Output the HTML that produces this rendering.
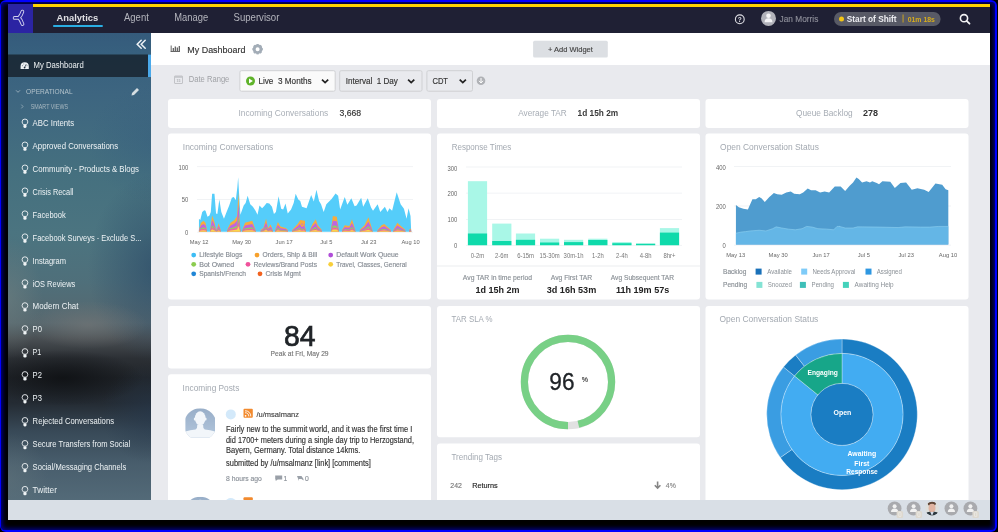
<!DOCTYPE html>
<html><head><meta charset="utf-8"><style>
html,body{margin:0;padding:0;width:998px;height:532px;overflow:hidden;background:#000;}
#frame{position:absolute;left:0;top:0;width:997px;height:532px;box-sizing:border-box;border-radius:6px;background:#0000ff;}
#inner{position:absolute;left:1px;top:2px;width:993.5px;height:527.5px;border-radius:4px;background:#000;box-shadow:inset 0 0 5px 1px rgba(0,0,210,0.8);}
#app{position:absolute;left:8px;top:4px;width:982px;height:516px;background:#e9eaee;border-radius:0 0 2px 2px;overflow:hidden;}
#side{position:absolute;left:8px;top:33px;width:143px;height:467px;
background:
radial-gradient(ellipse 80px 28px at 55px 345px, rgba(14,16,19,0.85), rgba(14,16,19,0) 100%),
radial-gradient(ellipse 60px 24px at 80px 292px, rgba(118,120,120,0.6), rgba(118,120,120,0) 100%),
radial-gradient(ellipse 70px 95px at 150px 235px, rgba(42,74,104,0.7), rgba(42,74,104,0) 100%),
radial-gradient(ellipse 70px 60px at 150px 110px, rgba(52,92,126,0.45), rgba(52,92,126,0) 100%),
radial-gradient(ellipse 35px 60px at 0px 265px, rgba(112,128,128,0.55), rgba(112,128,128,0) 100%),
radial-gradient(ellipse 50px 50px at 143px 380px, rgba(38,56,76,0.6), rgba(38,56,76,0) 100%),
radial-gradient(ellipse 40px 45px at 0px 445px, rgba(100,118,124,0.45), rgba(100,118,124,0) 100%),
linear-gradient(180deg,#355b7c 0px,#37607e 20px,#3d6580 60px,#45707f 140px,#4b7480 200px,#4f6f7a 250px,#56676e 290px,#4a5054 305px,#2c3035 325px,#202429 345px,#242b33 370px,#384957 398px,#485d6c 430px,#536a78 467px);}
svg{position:absolute;left:0;top:0;font-family:'Liberation Sans', sans-serif;will-change:transform;}
</style></head><body>
<div id="frame"></div><div id="inner"></div>
<div id="app"></div>
<div id="side"></div>
<svg width="998" height="532" viewBox="0 0 998 532">
<rect x="8" y="4" width="982" height="29" fill="#1f2034"/>
<rect x="33" y="4" width="957" height="3" fill="#ffd400"/>
<rect x="8" y="4" width="25" height="29" fill="#2b24a3"/>
<g stroke-linecap="round" stroke-linejoin="round" fill="none"><path d="M22.4 11.6 Q21 15.8 18.9 17.6 Q16.5 17.9 14.6 17.9 M18.9 17.6 Q21 19.8 22.5 24.1" stroke="#d4d4ee" stroke-width="3.7"/><path d="M22.4 11.6 Q21 15.8 18.9 17.6 Q16.5 17.9 14.6 17.9 M18.9 17.6 Q21 19.8 22.5 24.1" stroke="#2b23a3" stroke-width="1.9"/></g>
<text x="56.5" y="20.8" font-size="9.4" fill="#e0e0e4" font-weight="700" text-anchor="start"  textLength="41.69" lengthAdjust="spacingAndGlyphs">Analytics</text>
<rect x="53.2" y="25" width="49.5" height="2" fill="#2aaee3"/>
<text x="124" y="20.8" font-size="10.26" fill="#b4b5bd" font-weight="400" text-anchor="start"  textLength="24.83" lengthAdjust="spacingAndGlyphs">Agent</text>
<text x="174.3" y="20.8" font-size="10.15" fill="#b4b5bd" font-weight="400" text-anchor="start"  textLength="33.89" lengthAdjust="spacingAndGlyphs">Manage</text>
<text x="233.5" y="20.8" font-size="10.37" fill="#b4b5bd" font-weight="400" text-anchor="start"  textLength="45.86" lengthAdjust="spacingAndGlyphs">Supervisor</text>
<circle cx="739.8" cy="19.3" r="4.4" fill="none" stroke="#e0e0e6" stroke-width="1.1"/>
<text x="739.8" y="22.1" font-size="7.02" fill="#e0e0e6" font-weight="700" text-anchor="middle"  textLength="3.98" lengthAdjust="spacingAndGlyphs">?</text>
<circle cx="768.5" cy="18.4" r="7.5" fill="#b1b2ba"/>
<circle cx="768.5" cy="15.8" r="2.3" fill="#f4f4f6"/><path d="M764.6 22.3 q0 -4 3.9 -4 q3.9 0 3.9 4 z" fill="#f4f4f6"/>
<text x="779.6" y="22" font-size="8.96" fill="#8d8e99" font-weight="400" text-anchor="start"  stroke="#8d8e99" stroke-width="0.15" textLength="38.73" lengthAdjust="spacingAndGlyphs">Jan Morris</text>
<rect x="834" y="12" width="106.6" height="14" rx="7" fill="#585a66"/>
<circle cx="841.5" cy="18.9" r="2.5" fill="#f3c515"/>
<text x="846.8" y="21.9" font-size="8.96" fill="#ececf0" font-weight="700" text-anchor="start"  textLength="49.78" lengthAdjust="spacingAndGlyphs">Start of Shift</text>
<rect x="902.6" y="14.5" width="0.9" height="8" fill="#d4a91c"/>
<text x="907.7" y="21.9" font-size="7.45" fill="#d6ac1e" font-weight="700" text-anchor="start"  textLength="27.20" lengthAdjust="spacingAndGlyphs">01m 18s</text>
<circle cx="964" cy="18.2" r="3.6" fill="none" stroke="#f2f2f4" stroke-width="1.6"/><path d="M966.6 20.8 L969.5 23.7" stroke="#f2f2f4" stroke-width="1.8" stroke-linecap="round"/>
<rect x="151" y="33" width="839" height="32" fill="#ffffff"/>
<rect x="151" y="65" width="839" height="435" fill="#e9eaee"/>
<g fill="#555"><rect x="170.7" y="45.5" width="0.9" height="6.3"/><rect x="170.7" y="51" width="9.3" height="0.9"/><rect x="172.7" y="48" width="1.2" height="3"/><rect x="174.7" y="46.5" width="1.2" height="4.5"/><rect x="176.7" y="47.5" width="1.2" height="3.5"/><rect x="178.7" y="46" width="1.2" height="5"/></g>
<text x="187.3" y="52.8" font-size="9.67" fill="#333" font-weight="400" text-anchor="start"  stroke="#333" stroke-width="0.15" textLength="58.12" lengthAdjust="spacingAndGlyphs">My Dashboard</text>
<g transform="translate(257.6,49.2)"><circle r="3.4" fill="none" stroke="#a3adb7" stroke-width="2.8"/><rect x="-1.1" y="-5.2" width="2.2" height="2.4" fill="#a3adb7" transform="rotate(0)"/><rect x="-1.1" y="-5.2" width="2.2" height="2.4" fill="#a3adb7" transform="rotate(45)"/><rect x="-1.1" y="-5.2" width="2.2" height="2.4" fill="#a3adb7" transform="rotate(90)"/><rect x="-1.1" y="-5.2" width="2.2" height="2.4" fill="#a3adb7" transform="rotate(135)"/><rect x="-1.1" y="-5.2" width="2.2" height="2.4" fill="#a3adb7" transform="rotate(180)"/><rect x="-1.1" y="-5.2" width="2.2" height="2.4" fill="#a3adb7" transform="rotate(225)"/><rect x="-1.1" y="-5.2" width="2.2" height="2.4" fill="#a3adb7" transform="rotate(270)"/><rect x="-1.1" y="-5.2" width="2.2" height="2.4" fill="#a3adb7" transform="rotate(315)"/></g>
<rect x="533.1" y="40.7" width="74.7" height="16.9" rx="1.5" fill="#dcdfe3"/>
<text x="548" y="51.8" font-size="8.1" fill="#444" font-weight="400" text-anchor="start"  stroke="#444" stroke-width="0.15" textLength="44.83" lengthAdjust="spacingAndGlyphs">+ Add Widget</text>
<g fill="none" stroke="#b7b9bd" stroke-width="0.8"><rect x="174.5" y="76" width="8" height="7.5" rx="0.5"/></g><rect x="174.5" y="76" width="8" height="1.8" fill="#c4c6ca"/>
<text x="178.5" y="82.3" font-size="3.6" fill="#b0b2b6" font-weight="700" text-anchor="middle" >15</text>
<text x="188.8" y="82.3" font-size="8.21" fill="#a0a2a6" font-weight="400" text-anchor="start"  textLength="40.53" lengthAdjust="spacingAndGlyphs">Date Range</text>
<rect x="239.9" y="70.7" width="95.3" height="20.5" rx="1.5" fill="#fafafa" stroke="#cfd0d3" stroke-width="1"/>
<circle cx="250.5" cy="81" r="4.5" fill="#5fb32a"/><path d="M249 78.6 L252.9 81 L249 83.4 z" fill="#fff"/>
<text x="258.4" y="84" font-size="8.86" fill="#333" font-weight="400" text-anchor="start"  stroke="#333" stroke-width="0.15" textLength="53.25" lengthAdjust="spacingAndGlyphs">Live&#160;&#160;3 Months</text>
<path d="M322 79.6 L325.1 82.6 L328.2 79.6" fill="none" stroke="#222" stroke-width="1.7"/>
<rect x="339.7" y="70.7" width="82.3" height="20.5" rx="1.5" fill="#e9eaee" stroke="#cfd0d3" stroke-width="1"/>
<text x="345.7" y="84" font-size="8.75" fill="#333" font-weight="400" text-anchor="start"  stroke="#333" stroke-width="0.15" textLength="52.19" lengthAdjust="spacingAndGlyphs">Interval&#160;&#160;1 Day</text>
<path d="M408.1 79.6 L411.2 82.6 L414.3 79.6" fill="none" stroke="#222" stroke-width="1.7"/>
<rect x="426.9" y="70.7" width="45.6" height="20.5" rx="1.5" fill="#e9eaee" stroke="#cfd0d3" stroke-width="1"/>
<text x="432.4" y="84" font-size="8.21" fill="#333" font-weight="400" text-anchor="start"  stroke="#333" stroke-width="0.15" textLength="15.61" lengthAdjust="spacingAndGlyphs">CDT</text>
<path d="M459.7 79.6 L462.8 82.6 L465.9 79.6" fill="none" stroke="#222" stroke-width="1.7"/>
<circle cx="481" cy="80.8" r="4.3" fill="#b0b2b6"/><path d="M481 78 V82.5 M479 80.8 L481 83 L483 80.8" fill="none" stroke="#fff" stroke-width="1"/>
<rect x="168" y="99" width="263" height="29" rx="3" fill="#fff"/>
<rect x="437" y="99" width="263" height="29" rx="3" fill="#fff"/>
<rect x="705.5" y="99" width="263" height="29" rx="3" fill="#fff"/>
<text x="238.4" y="115.7" font-size="9.07" fill="#a9afb7" font-weight="400" text-anchor="start"  textLength="89.84" lengthAdjust="spacingAndGlyphs">Incoming Conversations</text>
<text x="339.4" y="116" font-size="9.4" fill="#333" font-weight="400" text-anchor="start"  stroke="#333" stroke-width="0.15" textLength="21.75" lengthAdjust="spacingAndGlyphs">3,668</text>
<text x="518.2" y="116.2" font-size="8.91" fill="#a7adb5" font-weight="400" text-anchor="start"  textLength="48.62" lengthAdjust="spacingAndGlyphs">Average TAR</text>
<text x="577.6" y="116.2" font-size="8.96" fill="#3a3a3a" font-weight="700" text-anchor="start"  textLength="40.59" lengthAdjust="spacingAndGlyphs">1d 15h 2m</text>
<text x="796" y="116" font-size="8.96" fill="#a7adb5" font-weight="400" text-anchor="start"  textLength="56.73" lengthAdjust="spacingAndGlyphs">Queue Backlog</text>
<text x="863.1" y="116" font-size="9.72" fill="#333" font-weight="700" text-anchor="start"  textLength="15.03" lengthAdjust="spacingAndGlyphs">278</text>
<rect x="168" y="133.5" width="263" height="166" rx="3" fill="#fff"/>
<rect x="437" y="133.5" width="263" height="166" rx="3" fill="#fff"/>
<rect x="705.5" y="133.5" width="263" height="166" rx="3" fill="#fff"/>
<rect x="168" y="306" width="263" height="62.6" rx="3" fill="#fff"/>
<rect x="168" y="374.3" width="263" height="140" rx="3" fill="#fff"/>
<rect x="437" y="306" width="263" height="131.2" rx="3" fill="#fff"/>
<rect x="437" y="443.5" width="263" height="70" rx="3" fill="#fff"/>
<rect x="705.5" y="306" width="263" height="210" rx="3" fill="#fff"/>
<text x="182.8" y="149.8" font-size="9.13" fill="#a3a9b1" font-weight="400" text-anchor="start"  textLength="90.52" lengthAdjust="spacingAndGlyphs">Incoming Conversations</text>
<rect x="197" y="166.29999999999998" width="216" height="0.8" fill="#eef0f3"/>
<rect x="197" y="199.1" width="216" height="0.8" fill="#eef0f3"/>
<rect x="197" y="231.79999999999998" width="216" height="0.8" fill="#eef0f3"/>
<text x="188.3" y="169.8" font-size="6.37" fill="#666" font-weight="400" text-anchor="end"  textLength="9.84" lengthAdjust="spacingAndGlyphs">100</text>
<text x="188.3" y="202.2" font-size="6.37" fill="#666" font-weight="400" text-anchor="end"  textLength="6.56" lengthAdjust="spacingAndGlyphs">50</text>
<text x="188.3" y="234.5" font-size="6.37" fill="#666" font-weight="400" text-anchor="end"  textLength="3.28" lengthAdjust="spacingAndGlyphs">0</text>
<polygon points="198.95,231.8 198.95,218.68 200.26,220.0 202.24,212.11 204.21,210.13 205.53,210.79 207.5,216.71 209.47,215.39 210.79,212.11 212.11,193.68 214.47,193.68 216.05,213.42 217.37,214.08 219.34,199.61 221.32,212.11 223.95,218.68 226.58,212.11 229.21,205.53 231.84,197.63 233.82,196.97 235.79,200.26 237.37,187.11 238.16,177.24 239.08,193.68 240.39,214.74 243.68,205.53 245.66,202.89 247.63,195.66 250.26,204.21 252.89,206.84 255.53,210.79 257.5,214.74 259.47,205.53 262.11,208.16 264.08,206.18 266.71,202.89 269.34,203.55 271.97,206.84 273.95,214.08 275.92,212.11 278.55,196.32 281.18,208.82 283.16,209.47 285.53,203.55 287.76,213.42 291.05,209.47 293.68,202.89 295.66,193.68 298.29,199.61 300.26,200.92 301.97,206.84 306.58,208.16 311.18,195.0 313.82,201.58 316.45,189.74 319.08,200.92 321.05,204.21 323.68,212.11 326.32,204.21 331.58,198.95 335.53,193.42 338.16,195.66 340.13,209.47 344.74,196.97 347.37,204.87 351.32,198.29 354.61,206.18 356.58,205.53 361.18,197.63 363.16,206.84 367.76,198.29 371.05,207.5 373.03,210.79 377.63,204.21 380.26,212.11 384.87,206.84 387.5,212.11 389.47,208.16 392.11,210.79 396.71,192.37 400.66,204.21 403.95,208.82 406.58,218.68 408.55,208.16 410.53,216.05 411.2,231.8" fill="#55cdfa"/>
<polygon points="198.95,231.8 198.95,229.87 200.92,222.63 203.55,220.66 205.53,222.63 206.84,229.87 206.84,231.8" fill="#f6ac3f"/>
<polygon points="198.95,231.8 198.95,230.45 200.92,225.38 203.55,224.0 205.53,225.38 206.84,230.45 206.84,231.8" fill="#c064e0"/>
<polygon points="198.95,231.8 198.95,231.03 200.92,228.13 203.55,227.34 205.53,228.13 206.84,231.03 206.84,231.8" fill="#8fd163"/>
<polygon points="198.95,231.8 198.95,231.28 200.92,229.32 203.55,228.79 205.53,229.32 206.84,231.28 206.84,231.8" fill="#f45fa6"/>
<polygon points="198.95,231.8 198.95,231.51 200.92,230.42 203.55,230.13 205.53,230.42 206.84,231.51 206.84,231.8" fill="#f9d84b"/>
<polygon points="210.13,231.8 210.13,229.87 212.11,215.39 214.08,220.66 215.39,226.58 216.71,229.87 218.68,223.29 220.66,229.87 220.66,231.8" fill="#f6ac3f"/>
<polygon points="210.13,231.8 210.13,230.45 212.11,220.31 214.08,224.0 215.39,228.15 216.71,230.45 218.68,225.84 220.66,230.45 220.66,231.8" fill="#c064e0"/>
<polygon points="210.13,231.8 210.13,231.03 212.11,225.24 214.08,227.34 215.39,229.71 216.71,231.03 218.68,228.4 220.66,231.03 220.66,231.8" fill="#8fd163"/>
<polygon points="210.13,231.8 210.13,231.28 212.11,227.37 214.08,228.79 215.39,230.39 216.71,231.28 218.68,229.5 220.66,231.28 220.66,231.8" fill="#f45fa6"/>
<polygon points="210.13,231.8 210.13,231.51 212.11,229.34 214.08,230.13 215.39,231.02 216.71,231.51 218.68,230.52 220.66,231.51 220.66,231.8" fill="#f9d84b"/>
<polygon points="227.24,231.8 227.24,229.87 230.53,222.63 234.47,220.0 237.11,216.05 238.42,192.37 239.47,216.05 240.39,229.87 240.39,231.8" fill="#f6ac3f"/>
<polygon points="227.24,231.8 227.24,230.45 230.53,225.38 234.47,223.54 237.11,220.78 238.42,204.2 239.47,220.78 240.39,230.45 240.39,231.8" fill="#c064e0"/>
<polygon points="227.24,231.8 227.24,231.03 230.53,228.13 234.47,227.08 237.11,225.5 238.42,216.03 239.47,225.5 240.39,231.03 240.39,231.8" fill="#8fd163"/>
<polygon points="227.24,231.8 227.24,231.28 230.53,229.32 234.47,228.61 237.11,227.55 238.42,221.15 239.47,227.55 240.39,231.28 240.39,231.8" fill="#f45fa6"/>
<polygon points="227.24,231.8 227.24,231.51 230.53,230.42 234.47,230.03 237.11,229.44 238.42,225.89 239.47,229.44 240.39,231.51 240.39,231.8" fill="#f9d84b"/>
<polygon points="242.37,231.8 242.37,229.87 245.0,222.63 247.63,221.97 252.24,220.66 255.53,229.87 255.53,231.8" fill="#f6ac3f"/>
<polygon points="242.37,231.8 242.37,230.45 245.0,225.38 247.63,224.92 252.24,224.0 255.53,230.45 255.53,231.8" fill="#c064e0"/>
<polygon points="242.37,231.8 242.37,231.03 245.0,228.13 247.63,227.87 252.24,227.34 255.53,231.03 255.53,231.8" fill="#8fd163"/>
<polygon points="242.37,231.8 242.37,231.28 245.0,229.32 247.63,229.15 252.24,228.79 255.53,231.28 255.53,231.8" fill="#f45fa6"/>
<polygon points="242.37,231.8 242.37,231.51 245.0,230.42 247.63,230.33 252.24,230.13 255.53,231.51 255.53,231.8" fill="#f9d84b"/>
<polygon points="260.79,231.8 260.79,229.87 263.42,227.89 266.05,218.68 268.03,227.89 270.66,224.61 272.63,229.87 272.63,231.8" fill="#f6ac3f"/>
<polygon points="260.79,231.8 260.79,230.45 263.42,229.06 266.05,222.62 268.03,229.06 270.66,226.77 272.63,230.45 272.63,231.8" fill="#c064e0"/>
<polygon points="260.79,231.8 260.79,231.03 263.42,230.24 266.05,226.55 268.03,230.24 270.66,228.92 272.63,231.03 272.63,231.8" fill="#8fd163"/>
<polygon points="260.79,231.8 260.79,231.28 263.42,230.74 266.05,228.26 268.03,230.74 270.66,229.86 272.63,231.28 272.63,231.8" fill="#f45fa6"/>
<polygon points="260.79,231.8 260.79,231.51 263.42,231.21 266.05,229.83 268.03,231.21 270.66,230.72 272.63,231.51 272.63,231.8" fill="#f9d84b"/>
<polygon points="275.26,231.8 275.26,229.87 277.89,221.97 280.53,226.58 285.79,227.89 287.76,229.87 287.76,231.8" fill="#f6ac3f"/>
<polygon points="275.26,231.8 275.26,230.45 277.89,224.92 280.53,228.15 285.79,229.06 287.76,230.45 287.76,231.8" fill="#c064e0"/>
<polygon points="275.26,231.8 275.26,231.03 277.89,227.87 280.53,229.71 285.79,230.24 287.76,231.03 287.76,231.8" fill="#8fd163"/>
<polygon points="275.26,231.8 275.26,231.28 277.89,229.15 280.53,230.39 285.79,230.74 287.76,231.28 287.76,231.8" fill="#f45fa6"/>
<polygon points="275.26,231.8 275.26,231.51 277.89,230.33 280.53,231.02 285.79,231.21 287.76,231.51 287.76,231.8" fill="#f9d84b"/>
<polygon points="292.37,231.8 292.37,229.87 297.63,223.95 300.26,220.0 305.0,220.66 305.0,231.8" fill="#f6ac3f"/>
<polygon points="292.37,231.8 292.37,230.45 297.63,226.31 300.26,223.54 305.0,224.0 305.0,231.8" fill="#c064e0"/>
<polygon points="292.37,231.8 292.37,231.03 297.63,228.66 300.26,227.08 305.0,227.34 305.0,231.8" fill="#8fd163"/>
<polygon points="292.37,231.8 292.37,231.28 297.63,229.68 300.26,228.61 305.0,228.79 305.0,231.8" fill="#f45fa6"/>
<polygon points="292.37,231.8 292.37,231.51 297.63,230.62 300.26,230.03 305.0,230.13 305.0,231.8" fill="#f9d84b"/>
<polygon points="300.0,231.8 300.0,221.32 301.97,225.26 303.95,222.63 305.92,229.87 305.92,231.8" fill="#f6ac3f"/>
<polygon points="300.0,231.8 300.0,224.46 301.97,227.22 303.95,225.38 305.92,230.45 305.92,231.8" fill="#c064e0"/>
<polygon points="300.0,231.8 300.0,227.61 301.97,229.18 303.95,228.13 305.92,231.03 305.92,231.8" fill="#8fd163"/>
<polygon points="300.0,231.8 300.0,228.97 301.97,230.03 303.95,229.32 305.92,231.28 305.92,231.8" fill="#f45fa6"/>
<polygon points="300.0,231.8 300.0,230.23 301.97,230.82 303.95,230.42 305.92,231.51 305.92,231.8" fill="#f9d84b"/>
<polygon points="309.87,231.8 309.87,229.87 312.5,223.95 315.79,219.34 317.76,225.26 321.71,229.87 321.71,231.8" fill="#f6ac3f"/>
<polygon points="309.87,231.8 309.87,230.45 312.5,226.31 315.79,223.08 317.76,227.22 321.71,230.45 321.71,231.8" fill="#c064e0"/>
<polygon points="309.87,231.8 309.87,231.03 312.5,228.66 315.79,226.82 317.76,229.18 321.71,231.03 321.71,231.8" fill="#8fd163"/>
<polygon points="309.87,231.8 309.87,231.28 312.5,229.68 315.79,228.44 317.76,230.03 321.71,231.28 321.71,231.8" fill="#f45fa6"/>
<polygon points="309.87,231.8 309.87,231.51 312.5,230.62 315.79,229.93 317.76,230.82 321.71,231.51 321.71,231.8" fill="#f9d84b"/>
<polygon points="330.92,231.8 330.92,229.87 332.89,216.05 336.84,216.71 338.82,229.87 338.82,231.8" fill="#f6ac3f"/>
<polygon points="330.92,231.8 330.92,230.45 332.89,220.78 336.84,221.24 338.82,230.45 338.82,231.8" fill="#c064e0"/>
<polygon points="330.92,231.8 330.92,231.03 332.89,225.5 336.84,225.76 338.82,231.03 338.82,231.8" fill="#8fd163"/>
<polygon points="330.92,231.8 330.92,231.28 332.89,227.55 336.84,227.73 338.82,231.28 338.82,231.8" fill="#f45fa6"/>
<polygon points="330.92,231.8 330.92,231.51 332.89,229.44 336.84,229.54 338.82,231.51 338.82,231.8" fill="#f9d84b"/>
<polygon points="342.11,231.8 342.11,229.87 344.74,225.26 349.34,225.92 351.97,219.34 355.26,229.87 355.26,231.8" fill="#f6ac3f"/>
<polygon points="342.11,231.8 342.11,230.45 344.74,227.22 349.34,227.68 351.97,223.08 355.26,230.45 355.26,231.8" fill="#c064e0"/>
<polygon points="342.11,231.8 342.11,231.03 344.74,229.18 349.34,229.45 351.97,226.82 355.26,231.03 355.26,231.8" fill="#8fd163"/>
<polygon points="342.11,231.8 342.11,231.28 344.74,230.03 349.34,230.21 351.97,228.44 355.26,231.28 355.26,231.8" fill="#f45fa6"/>
<polygon points="342.11,231.8 342.11,231.51 344.74,230.82 349.34,230.92 351.97,229.93 355.26,231.51 355.26,231.8" fill="#f9d84b"/>
<polygon points="359.87,231.8 359.87,229.87 364.47,225.26 368.42,217.37 372.37,229.87 372.37,231.8" fill="#f6ac3f"/>
<polygon points="359.87,231.8 359.87,230.45 364.47,227.22 368.42,221.7 372.37,230.45 372.37,231.8" fill="#c064e0"/>
<polygon points="359.87,231.8 359.87,231.03 364.47,229.18 368.42,226.03 372.37,231.03 372.37,231.8" fill="#8fd163"/>
<polygon points="359.87,231.8 359.87,231.28 364.47,230.03 368.42,227.9 372.37,231.28 372.37,231.8" fill="#f45fa6"/>
<polygon points="359.87,231.8 359.87,231.51 364.47,230.82 368.42,229.64 372.37,231.51 372.37,231.8" fill="#f9d84b"/>
<polygon points="377.63,231.8 377.63,229.87 381.58,225.26 384.21,223.95 390.79,229.87 390.79,231.8" fill="#f6ac3f"/>
<polygon points="377.63,231.8 377.63,230.45 381.58,227.22 384.21,226.31 390.79,230.45 390.79,231.8" fill="#c064e0"/>
<polygon points="377.63,231.8 377.63,231.03 381.58,229.18 384.21,228.66 390.79,231.03 390.79,231.8" fill="#8fd163"/>
<polygon points="377.63,231.8 377.63,231.28 381.58,230.03 384.21,229.68 390.79,231.28 390.79,231.8" fill="#f45fa6"/>
<polygon points="377.63,231.8 377.63,231.51 381.58,230.82 384.21,230.62 390.79,231.51 390.79,231.8" fill="#f9d84b"/>
<polygon points="393.42,231.8 393.42,229.87 397.37,222.63 400.0,225.26 405.26,229.87 405.26,231.8" fill="#f6ac3f"/>
<polygon points="393.42,231.8 393.42,230.45 397.37,225.38 400.0,227.22 405.26,230.45 405.26,231.8" fill="#c064e0"/>
<polygon points="393.42,231.8 393.42,231.03 397.37,228.13 400.0,229.18 405.26,231.03 405.26,231.8" fill="#8fd163"/>
<polygon points="393.42,231.8 393.42,231.28 397.37,229.32 400.0,230.03 405.26,231.28 405.26,231.8" fill="#f45fa6"/>
<polygon points="393.42,231.8 393.42,231.51 397.37,230.42 400.0,230.82 405.26,231.51 405.26,231.8" fill="#f9d84b"/>
<polygon points="409.21,231.8 409.21,229.87 410.53,228.55 411.18,229.87 411.18,231.8" fill="#f6ac3f"/>
<polygon points="409.21,231.8 409.21,230.45 410.53,229.53 411.18,230.45 411.18,231.8" fill="#c064e0"/>
<polygon points="409.21,231.8 409.21,231.03 410.53,230.5 411.18,231.03 411.18,231.8" fill="#8fd163"/>
<polygon points="409.21,231.8 409.21,231.28 410.53,230.92 411.18,231.28 411.18,231.8" fill="#f45fa6"/>
<polygon points="409.21,231.8 409.21,231.51 410.53,231.31 411.18,231.51 411.18,231.8" fill="#f9d84b"/>
<text x="189.7" y="243.8" font-size="6.21" fill="#666" font-weight="400" text-anchor="start"  textLength="18.86" lengthAdjust="spacingAndGlyphs">May 12</text>
<text x="232.2" y="243.8" font-size="6.21" fill="#666" font-weight="400" text-anchor="start"  textLength="18.86" lengthAdjust="spacingAndGlyphs">May 30</text>
<text x="275.5" y="243.8" font-size="6.21" fill="#666" font-weight="400" text-anchor="start"  textLength="17.27" lengthAdjust="spacingAndGlyphs">Jun 17</text>
<text x="320.3" y="243.8" font-size="6.21" fill="#666" font-weight="400" text-anchor="start"  textLength="12.16" lengthAdjust="spacingAndGlyphs">Jul 5</text>
<text x="361" y="243.8" font-size="6.21" fill="#666" font-weight="400" text-anchor="start"  textLength="15.34" lengthAdjust="spacingAndGlyphs">Jul 23</text>
<text x="401.5" y="243.8" font-size="6.21" fill="#666" font-weight="400" text-anchor="start"  textLength="18.23" lengthAdjust="spacingAndGlyphs">Aug 10</text>
<circle cx="193.7" cy="255.1" r="2.4" fill="#3dbdf5"/>
<text x="199.2" y="257.4" font-size="7.24" fill="#858b93" font-weight="400" text-anchor="start"  stroke="#858b93" stroke-width="0.15" textLength="43.12" lengthAdjust="spacingAndGlyphs">Lifestyle Blogs</text>
<circle cx="257" cy="255.1" r="2.4" fill="#f7a12c"/>
<text x="262.5" y="257.4" font-size="7.24" fill="#858b93" font-weight="400" text-anchor="start"  stroke="#858b93" stroke-width="0.15" textLength="54.64" lengthAdjust="spacingAndGlyphs">Orders, Ship &amp; Bill</text>
<circle cx="330.7" cy="255.1" r="2.4" fill="#b04ed8"/>
<text x="336.2" y="257.4" font-size="7.24" fill="#858b93" font-weight="400" text-anchor="start"  stroke="#858b93" stroke-width="0.15" textLength="62.50" lengthAdjust="spacingAndGlyphs">Default Work Queue</text>
<circle cx="193.7" cy="264.3" r="2.4" fill="#8ccc50"/>
<text x="199.2" y="266.6" font-size="7.24" fill="#858b93" font-weight="400" text-anchor="start"  stroke="#858b93" stroke-width="0.15" textLength="34.90" lengthAdjust="spacingAndGlyphs">Bot Owned</text>
<circle cx="248" cy="264.3" r="2.4" fill="#f0529c"/>
<text x="253.5" y="266.6" font-size="7.24" fill="#858b93" font-weight="400" text-anchor="start"  stroke="#858b93" stroke-width="0.15" textLength="63.56" lengthAdjust="spacingAndGlyphs">Reviews/Brand Posts</text>
<circle cx="330.7" cy="264.3" r="2.4" fill="#f8cf3a"/>
<text x="336.2" y="266.6" font-size="7.24" fill="#858b93" font-weight="400" text-anchor="start"  stroke="#858b93" stroke-width="0.15" textLength="70.50" lengthAdjust="spacingAndGlyphs">Travel, Classes, General</text>
<circle cx="193.7" cy="273.8" r="2.4" fill="#1f86d6"/>
<text x="199.2" y="276.1" font-size="7.24" fill="#858b93" font-weight="400" text-anchor="start"  stroke="#858b93" stroke-width="0.15" textLength="46.84" lengthAdjust="spacingAndGlyphs">Spanish/French</text>
<circle cx="260" cy="273.8" r="2.4" fill="#f2621f"/>
<text x="265.5" y="276.1" font-size="7.24" fill="#858b93" font-weight="400" text-anchor="start"  stroke="#858b93" stroke-width="0.15" textLength="35.30" lengthAdjust="spacingAndGlyphs">Crisis Mgmt</text>
<text x="451.7" y="149.7" font-size="8.64" fill="#a3a9b1" font-weight="400" text-anchor="start"  textLength="59.59" lengthAdjust="spacingAndGlyphs">Response Times</text>
<rect x="466" y="166.6" width="216" height="0.8" fill="#eef0f3"/>
<text x="457.3" y="170.6" font-size="6.37" fill="#666" font-weight="400" text-anchor="end"  textLength="9.84" lengthAdjust="spacingAndGlyphs">300</text>
<rect x="466" y="192.7" width="216" height="0.8" fill="#eef0f3"/>
<text x="457.3" y="196.29999999999998" font-size="6.37" fill="#666" font-weight="400" text-anchor="end"  textLength="9.84" lengthAdjust="spacingAndGlyphs">200</text>
<rect x="466" y="219.0" width="216" height="0.8" fill="#eef0f3"/>
<text x="457.3" y="222.0" font-size="6.37" fill="#666" font-weight="400" text-anchor="end"  textLength="9.84" lengthAdjust="spacingAndGlyphs">100</text>
<rect x="466" y="244.9" width="216" height="0.8" fill="#eef0f3"/>
<text x="457.3" y="247.7" font-size="6.37" fill="#666" font-weight="400" text-anchor="end"  textLength="3.28" lengthAdjust="spacingAndGlyphs">0</text>
<rect x="467.9" y="181.2" width="19.2" height="64.0" fill="#a9f7e7"/>
<rect x="467.9" y="233.5" width="19.2" height="11.699999999999989" fill="#0fdaab"/>
<text x="477.5" y="257.7" font-size="6.37" fill="#777" font-weight="400" text-anchor="middle"  textLength="13.42" lengthAdjust="spacingAndGlyphs">0-2m</text>
<rect x="492.2" y="223.6" width="19.2" height="21.599999999999994" fill="#a9f7e7"/>
<rect x="492.2" y="241" width="19.2" height="4.199999999999989" fill="#0fdaab"/>
<text x="501.8" y="257.7" font-size="6.37" fill="#777" font-weight="400" text-anchor="middle"  textLength="13.42" lengthAdjust="spacingAndGlyphs">2-6m</text>
<rect x="515.9" y="233.5" width="19.2" height="11.699999999999989" fill="#a9f7e7"/>
<rect x="515.9" y="239.8" width="19.2" height="5.399999999999977" fill="#0fdaab"/>
<text x="525.5" y="257.7" font-size="6.37" fill="#777" font-weight="400" text-anchor="middle"  textLength="16.70" lengthAdjust="spacingAndGlyphs">6-15m</text>
<rect x="540" y="238.7" width="19.2" height="6.5" fill="#a9f7e7"/>
<rect x="540" y="242.5" width="19.2" height="2.6999999999999886" fill="#0fdaab"/>
<text x="549.6" y="257.7" font-size="6.37" fill="#777" font-weight="400" text-anchor="middle"  textLength="19.98" lengthAdjust="spacingAndGlyphs">15-30m</text>
<rect x="564" y="239.8" width="19.2" height="5.399999999999977" fill="#a9f7e7"/>
<rect x="564" y="242.1" width="19.2" height="3.0999999999999943" fill="#0fdaab"/>
<text x="573.6" y="257.7" font-size="6.37" fill="#777" font-weight="400" text-anchor="middle"  textLength="19.98" lengthAdjust="spacingAndGlyphs">30m-1h</text>
<rect x="588.2" y="238.7" width="19.2" height="6.5" fill="#a9f7e7"/>
<rect x="588.2" y="240" width="19.2" height="5.199999999999989" fill="#0fdaab"/>
<text x="597.8000000000001" y="257.7" font-size="6.37" fill="#777" font-weight="400" text-anchor="middle"  textLength="11.80" lengthAdjust="spacingAndGlyphs">1-2h</text>
<rect x="612.3" y="242" width="19.2" height="3.1999999999999886" fill="#a9f7e7"/>
<rect x="612.3" y="243.2" width="19.2" height="2.0" fill="#0fdaab"/>
<text x="621.9" y="257.7" font-size="6.37" fill="#777" font-weight="400" text-anchor="middle"  textLength="11.80" lengthAdjust="spacingAndGlyphs">2-4h</text>
<rect x="636" y="243.7" width="19.2" height="1.5" fill="#a9f7e7"/>
<rect x="636" y="243.7" width="19.2" height="1.5" fill="#0fdaab"/>
<text x="645.6" y="257.7" font-size="6.37" fill="#777" font-weight="400" text-anchor="middle"  textLength="11.80" lengthAdjust="spacingAndGlyphs">4-8h</text>
<rect x="659.9" y="228.1" width="19.2" height="17.099999999999994" fill="#a9f7e7"/>
<rect x="659.9" y="232.6" width="19.2" height="12.599999999999994" fill="#0fdaab"/>
<text x="669.5" y="257.7" font-size="6.37" fill="#777" font-weight="400" text-anchor="middle"  textLength="11.97" lengthAdjust="spacingAndGlyphs">8hr+</text>
<rect x="437" y="265.6" width="263" height="0.8" fill="#e6e8eb"/>
<text x="497.4" y="280.1" font-size="7.34" fill="#8a9096" font-weight="400" text-anchor="middle"  stroke="#8a9096" stroke-width="0.15" textLength="69.14" lengthAdjust="spacingAndGlyphs">Avg TAR in time period</text>
<text x="497.6" y="293" font-size="9.72" fill="#222" font-weight="700" text-anchor="middle"  textLength="44.03" lengthAdjust="spacingAndGlyphs">1d 15h 2m</text>
<text x="571.5" y="280.1" font-size="7.34" fill="#8a9096" font-weight="400" text-anchor="middle"  stroke="#8a9096" stroke-width="0.15" textLength="41.55" lengthAdjust="spacingAndGlyphs">Avg First TAR</text>
<text x="571.5" y="293" font-size="9.83" fill="#222" font-weight="700" text-anchor="middle"  textLength="49.55" lengthAdjust="spacingAndGlyphs">3d 16h 53m</text>
<text x="642.4" y="280.1" font-size="7.19" fill="#8a9096" font-weight="400" text-anchor="middle"  stroke="#8a9096" stroke-width="0.15" textLength="63.28" lengthAdjust="spacingAndGlyphs">Avg Subsequent TAR</text>
<text x="642.6" y="293" font-size="9.8" fill="#222" font-weight="700" text-anchor="middle"  textLength="53.42" lengthAdjust="spacingAndGlyphs">11h 19m 57s</text>
<text x="720.1" y="149.8" font-size="9.1" fill="#a3a9b1" font-weight="400" text-anchor="start"  textLength="98.78" lengthAdjust="spacingAndGlyphs">Open Conversation Status</text>
<rect x="734" y="166.1" width="217" height="0.8" fill="#eef0f3"/>
<text x="725.8" y="169.89999999999998" font-size="6.37" fill="#666" font-weight="400" text-anchor="end"  textLength="9.84" lengthAdjust="spacingAndGlyphs">400</text>
<rect x="734" y="205.6" width="217" height="0.8" fill="#eef0f3"/>
<text x="725.8" y="208.79999999999998" font-size="6.37" fill="#666" font-weight="400" text-anchor="end"  textLength="9.84" lengthAdjust="spacingAndGlyphs">200</text>
<rect x="734" y="244.7" width="217" height="0.8" fill="#eef0f3"/>
<text x="725.8" y="247.7" font-size="6.37" fill="#666" font-weight="400" text-anchor="end"  textLength="3.28" lengthAdjust="spacingAndGlyphs">0</text>
<polygon points="735.93,244.6 735.93,204.98 738.86,207.23 743.37,208.81 747.89,209.49 752.4,199.33 755.79,199.33 759.18,197.08 761.43,198.21 764.82,202.04 769.33,197.08 773.85,193.01 777.23,194.37 781.75,194.82 786.26,192.56 790.78,191.43 794.16,193.69 799.81,194.14 803.19,192.56 807.71,188.5 811.09,190.3 815.61,190.3 820.12,192.56 824.64,191.43 829.15,192.56 834.8,186.47 839.99,186.47 840.64,186.47 845.16,190.98 849.67,185.79 853.06,182.4 856.44,177.44 858.7,179.02 862.09,182.4 866.6,181.28 869.99,182.4 872.25,181.28 876.76,183.08 879.02,184.21 882.4,181.28 890.3,181.73 894.82,188.05 900.46,183.08 906.11,182.4 911.75,189.85 917.39,188.27 924.16,189.63 928.68,191.88 935.45,183.53 942.22,184.66 945.61,189.18 948.32,190.3 948.32,244.6" fill="#4f9ccf"/>
<polygon points="735.93,244.6 735.93,233.19 741.12,232.07 745.63,231.61 750.15,230.94 759.18,230.26 765.95,230.94 772.72,228.68 776.11,226.87 781.75,228.0 788.52,229.13 795.29,229.81 802.07,228.68 806.58,226.42 812.22,227.1 817.87,228.68 826.9,229.13 833.67,229.81 837.05,226.42 839.99,226.42 839.51,226.42 845.16,228.0 853.06,228.0 857.57,226.87 880.15,227.1 898.21,227.55 904.98,226.87 920.78,227.1 929.81,227.1 938.84,226.42 948.32,226.42 948.32,244.6" fill="#64b6e6"/>
<polyline points="735.93,233.19 741.12,232.07 745.63,231.61 750.15,230.94 759.18,230.26 765.95,230.94 772.72,228.68 776.11,226.87 781.75,228.0 788.52,229.13 795.29,229.81 802.07,228.68 806.58,226.42 812.22,227.1 817.87,228.68 826.9,229.13 833.67,229.81 837.05,226.42 839.99,226.42 839.51,226.42 845.16,228.0 853.06,228.0 857.57,226.87 880.15,227.1 898.21,227.55 904.98,226.87 920.78,227.1 929.81,227.1 938.84,226.42 948.32,226.42" fill="none" stroke="#8fd0f0" stroke-width="0.6"/>
<text x="726.2" y="256.8" font-size="6.26" fill="#666" font-weight="400" text-anchor="start"  textLength="19.02" lengthAdjust="spacingAndGlyphs">May 13</text>
<text x="768.6" y="256.8" font-size="6.26" fill="#666" font-weight="400" text-anchor="start"  textLength="19.02" lengthAdjust="spacingAndGlyphs">May 30</text>
<text x="812.4" y="256.8" font-size="6.26" fill="#666" font-weight="400" text-anchor="start"  textLength="17.41" lengthAdjust="spacingAndGlyphs">Jun 17</text>
<text x="857.7" y="256.8" font-size="6.26" fill="#666" font-weight="400" text-anchor="start"  textLength="12.25" lengthAdjust="spacingAndGlyphs">Jul 5</text>
<text x="898.4" y="256.8" font-size="6.26" fill="#666" font-weight="400" text-anchor="start"  textLength="15.47" lengthAdjust="spacingAndGlyphs">Jul 23</text>
<text x="938.8" y="256.8" font-size="6.26" fill="#666" font-weight="400" text-anchor="start"  textLength="18.38" lengthAdjust="spacingAndGlyphs">Aug 10</text>
<text x="723" y="274" font-size="7.13" fill="#8a9096" font-weight="400" text-anchor="start"  stroke="#8a9096" stroke-width="0.15" textLength="23.47" lengthAdjust="spacingAndGlyphs">Backlog</text>
<text x="723" y="287.3" font-size="7.13" fill="#8a9096" font-weight="400" text-anchor="start"  stroke="#8a9096" stroke-width="0.15" textLength="24.20" lengthAdjust="spacingAndGlyphs">Pending</text>
<rect x="755.6" y="268.6" width="6" height="6" fill="#1a71b9"/>
<text x="767.3" y="273.8" font-size="6.59" fill="#8a9096" font-weight="400" text-anchor="start"  textLength="24.62" lengthAdjust="spacingAndGlyphs">Available</text>
<rect x="801.2" y="268.6" width="6" height="6" fill="#7ecbf8"/>
<text x="812.4" y="273.8" font-size="6.59" fill="#8a9096" font-weight="400" text-anchor="start"  textLength="43.03" lengthAdjust="spacingAndGlyphs">Needs Approval</text>
<rect x="865.5" y="268.6" width="6" height="6" fill="#2e97e1"/>
<text x="876.8" y="273.8" font-size="6.59" fill="#8a9096" font-weight="400" text-anchor="start"  textLength="25.08" lengthAdjust="spacingAndGlyphs">Assigned</text>
<rect x="756.4" y="281.9" width="6" height="6" fill="#84e3d4"/>
<text x="767.8" y="287.09999999999997" font-size="6.59" fill="#8a9096" font-weight="400" text-anchor="start"  textLength="24.06" lengthAdjust="spacingAndGlyphs">Snoozed</text>
<rect x="799.9" y="281.9" width="6" height="6" fill="#3ebfb8"/>
<text x="811.6" y="287.09999999999997" font-size="6.59" fill="#8a9096" font-weight="400" text-anchor="start"  textLength="22.38" lengthAdjust="spacingAndGlyphs">Pending</text>
<rect x="842.9" y="281.9" width="6" height="6" fill="#44d2bb"/>
<text x="854.6" y="287.09999999999997" font-size="6.59" fill="#8a9096" font-weight="400" text-anchor="start"  textLength="39.10" lengthAdjust="spacingAndGlyphs">Awaiting Help</text>
<text x="299.8" y="345.9" font-size="29.87" fill="#202428" font-weight="400" text-anchor="middle" stroke="#202428" stroke-width="0.7" textLength="31.60" lengthAdjust="spacingAndGlyphs">84</text>
<text x="299.6" y="356.3" font-size="7.24" fill="#777" font-weight="400" text-anchor="middle"  stroke="#777" stroke-width="0.15" textLength="57.98" lengthAdjust="spacingAndGlyphs">Peak at Fri, May 29</text>
<text x="182.6" y="390.6" font-size="8.96" fill="#a3a9b1" font-weight="400" text-anchor="start"  textLength="56.73" lengthAdjust="spacingAndGlyphs">Incoming Posts</text>
<defs><clipPath id="avc"><circle cx="200.2" cy="424.5" r="16.2"/></clipPath><linearGradient id="avg" x1="0" y1="0" x2="0" y2="1"><stop offset="0" stop-color="#98aec8"/><stop offset="1" stop-color="#b2c6dc"/></linearGradient><clipPath id="botc"><rect x="0" y="0" width="998" height="500"/></clipPath><clipPath id="phc"><circle cx="932.1" cy="508.7" r="6.9"/></clipPath></defs>
<g transform="translate(0,0)" clip-path="url(#avc)"><rect x="185.4" y="408.3" width="29.6" height="29.3" fill="url(#avg)"/><ellipse cx="200.2" cy="418.2" rx="5.3" ry="7" fill="#f2f6fa"/><ellipse cx="194.8" cy="419" rx="1" ry="1.6" fill="#f2f6fa"/><ellipse cx="205.6" cy="419" rx="1" ry="1.6" fill="#f2f6fa"/><path d="M185.4 437.6 V431.6 Q190 430.2 195.6 429.6 Q197.6 428.2 197.3 424.6 L203.1 424.6 Q202.8 428.2 204.8 429.6 Q210.4 430.2 215 431.6 V437.6 Z" fill="#f2f6fa"/></g>
<circle cx="230.8" cy="414.4" r="5" fill="#d3e9fa"/>
<rect x="243.5" y="408.8" width="9.3" height="9" rx="1" fill="#f28a2e"/><circle cx="245.6" cy="415.8" r="0.9" fill="#fff"/><path d="M245 412.8 a3.4 3.4 0 0 1 3.8 3.6 M245 410.8 a5.4 5.4 0 0 1 5.8 5.6" fill="none" stroke="#fff" stroke-width="0.9"/>
<text x="256.5" y="416.9" font-size="8.1" fill="#444" font-weight="400" text-anchor="start"  stroke="#444" stroke-width="0.15" textLength="42.52" lengthAdjust="spacingAndGlyphs">/u/msalmanz</text>
<text x="226" y="431.6" font-size="8.55" fill="#333" font-weight="400" text-anchor="start"  stroke="#333" stroke-width="0.15" textLength="186.31" lengthAdjust="spacingAndGlyphs">Fairly new to the summit world, and it was the first time I</text>
<text x="226" y="442.6" font-size="8.44" fill="#333" font-weight="400" text-anchor="start"  stroke="#333" stroke-width="0.15" textLength="187.97" lengthAdjust="spacingAndGlyphs">did 1700+ meters during a single day trip to Herzogstand,</text>
<text x="226" y="453.3" font-size="8.55" fill="#333" font-weight="400" text-anchor="start"  stroke="#333" stroke-width="0.15" textLength="134.38" lengthAdjust="spacingAndGlyphs">Bayern, Germany. Total distance 14kms.</text>
<text x="226" y="466.3" font-size="8.52" fill="#333" font-weight="400" text-anchor="start"  stroke="#333" stroke-width="0.15" textLength="144.88" lengthAdjust="spacingAndGlyphs">submitted by /u/msalmanz [link] [comments]</text>
<text x="226" y="480.9" font-size="7.34" fill="#8a9098" font-weight="400" text-anchor="start"  stroke="#8a9098" stroke-width="0.15" textLength="35.91" lengthAdjust="spacingAndGlyphs">8 hours ago</text>
<path d="M275.2 475.5 h7 v4 h-4.5 l-2 1.6 v-1.6 h-0.5 z" fill="#9aa0a8"/>
<text x="283.6" y="480.9" font-size="7.34" fill="#8a9098" font-weight="400" text-anchor="start"  stroke="#8a9098" stroke-width="0.15" textLength="3.78" lengthAdjust="spacingAndGlyphs">1</text>
<path d="M297 476 h4.5 l2 3 v1.5 l-2 -1.5 h-2.5 v2 z" fill="#9aa0a8"/>
<text x="305" y="480.9" font-size="7.34" fill="#8a9098" font-weight="400" text-anchor="start"  stroke="#8a9098" stroke-width="0.15" textLength="3.78" lengthAdjust="spacingAndGlyphs">0</text>
<g clip-path="url(#botc)"><g transform="translate(0,88.5)" clip-path="url(#avc)"><rect x="185.4" y="408.3" width="29.6" height="29.3" fill="url(#avg)"/><ellipse cx="200.2" cy="418.2" rx="5.3" ry="7" fill="#f2f6fa"/><ellipse cx="194.8" cy="419" rx="1" ry="1.6" fill="#f2f6fa"/><ellipse cx="205.6" cy="419" rx="1" ry="1.6" fill="#f2f6fa"/><path d="M185.4 437.6 V431.6 Q190 430.2 195.6 429.6 Q197.6 428.2 197.3 424.6 L203.1 424.6 Q202.8 428.2 204.8 429.6 Q210.4 430.2 215 431.6 V437.6 Z" fill="#f2f6fa"/></g></g>
<circle cx="230.8" cy="502.9" r="5" fill="#d3e9fa"/><rect x="243.5" y="497.3" width="9.3" height="9" rx="1" fill="#f28a2e"/>
<text x="451.5" y="322" font-size="8.53" fill="#a3a9b1" font-weight="400" text-anchor="start"  textLength="41.08" lengthAdjust="spacingAndGlyphs">TAR SLA %</text>
<circle cx="568" cy="382" r="43.6" fill="none" stroke="#e1e1e1" stroke-width="7.2"/>
<circle cx="568" cy="382" r="43.6" fill="none" stroke="#78d086" stroke-width="7.2" stroke-dasharray="262.99 10.96" transform="rotate(90 568 382)"/>
<text x="561.9" y="390.3" font-size="23.69" fill="#202428" font-weight="400" text-anchor="middle" stroke="#202428" stroke-width="0.3" textLength="25.20" lengthAdjust="spacingAndGlyphs">96</text>
<text x="584.8" y="382" font-size="7.56" fill="#333" font-weight="400" text-anchor="middle"  stroke="#333" stroke-width="0.15" textLength="6.23" lengthAdjust="spacingAndGlyphs">%</text>
<text x="451.5" y="460.2" font-size="8.68" fill="#a3a9b1" font-weight="400" text-anchor="start"  textLength="50.45" lengthAdjust="spacingAndGlyphs">Trending Tags</text>
<text x="450.3" y="488.2" font-size="7.45" fill="#777" font-weight="400" text-anchor="start"  stroke="#777" stroke-width="0.15" textLength="11.50" lengthAdjust="spacingAndGlyphs">242</text>
<text x="472.2" y="488.2" font-size="7.88" fill="#222" font-weight="400" text-anchor="start"  stroke="#222" stroke-width="0.15" textLength="25.56" lengthAdjust="spacingAndGlyphs">Returns</text>
<path d="M657.6 481.5 V488 M654.8 485.3 L657.6 488.2 L660.4 485.3" fill="none" stroke="#858585" stroke-width="1.6"/>
<text x="665.8" y="488.2" font-size="7.45" fill="#888" font-weight="400" text-anchor="start"  stroke="#888" stroke-width="0.15" textLength="9.97" lengthAdjust="spacingAndGlyphs">4%</text>
<text x="719.5" y="322" font-size="9.1" fill="#a3a9b1" font-weight="400" text-anchor="start"  textLength="98.78" lengthAdjust="spacingAndGlyphs">Open Conversation Status</text>
<path d="M842.00 339.10 A75.3 75.3 0 1 1 780.32 457.59 L792.03 449.39 A61 61 0 1 0 842.00 353.40 Z" fill="#1a7dc3" stroke="#ffffff" stroke-width="0.5" stroke-opacity="0.6"/>
<path d="M780.32 457.59 A75.3 75.3 0 0 1 783.48 367.01 L794.59 376.01 A61 61 0 0 0 792.03 449.39 Z" fill="#3a9de2" stroke="#ffffff" stroke-width="0.5" stroke-opacity="0.6"/>
<path d="M783.48 367.01 A75.3 75.3 0 0 1 795.64 355.06 L804.44 366.33 A61 61 0 0 0 794.59 376.01 Z" fill="#1a7dc3" stroke="#ffffff" stroke-width="0.5" stroke-opacity="0.6"/>
<path d="M795.64 355.06 A75.3 75.3 0 0 1 841.99 339.10 L841.99 353.40 A61 61 0 0 0 804.44 366.33 Z" fill="#3a9de2" stroke="#ffffff" stroke-width="0.5" stroke-opacity="0.6"/>
<path d="M842.00 353.40 A61 61 0 1 1 794.59 376.01 L817.91 394.89 A31 31 0 1 0 842.00 383.40 Z" fill="#42acf2" stroke="#ffffff" stroke-width="0.5" stroke-opacity="0.6"/>
<path d="M794.59 376.01 A61 61 0 0 1 841.99 353.40 L841.99 383.40 A31 31 0 0 0 817.91 394.89 Z" fill="#17a689" stroke="#ffffff" stroke-width="0.5" stroke-opacity="0.6"/>
<circle cx="842" cy="414.4" r="31" fill="#1a7dc3" stroke="#fff" stroke-width="0.5" stroke-opacity="0.6"/>
<text x="822.7" y="374.7" font-size="7.24" fill="#fff" font-weight="700" text-anchor="middle"  textLength="30.47" lengthAdjust="spacingAndGlyphs">Engaging</text>
<text x="842.4" y="415.3" font-size="7.56" fill="#fff" font-weight="700" text-anchor="middle"  textLength="17.89" lengthAdjust="spacingAndGlyphs">Open</text>
<text x="861.8" y="455.9" font-size="7.45" fill="#fff" font-weight="700" text-anchor="middle"  textLength="28.59" lengthAdjust="spacingAndGlyphs">Awaiting</text>
<text x="861.8" y="466" font-size="7.45" fill="#fff" font-weight="700" text-anchor="middle"  textLength="14.94" lengthAdjust="spacingAndGlyphs">First</text>
<text x="862" y="473.9" font-size="7.13" fill="#fff" font-weight="700" text-anchor="middle"  textLength="31.52" lengthAdjust="spacingAndGlyphs">Response</text>
<rect x="8" y="500" width="982" height="20" fill="#d9dfe6"/>
<circle cx="894.6" cy="508.5" r="6.9" fill="#a9aaae"/><circle cx="894.6" cy="506.3" r="2" fill="#f2f2f2"/><path d="M891.0 512 q0 -3.5 3.6 -3.5 q3.6 0 3.6 3.5 z" fill="#f2f2f2"/>
<rect x="896.6" y="511" width="6.5" height="7" rx="1.5" fill="#ddd8cf"/><rect x="898.8000000000001" y="512.3" width="2.2" height="4.3" rx="0.5" fill="none" stroke="#f4f2ee" stroke-width="0.6"/>
<circle cx="913.6" cy="508.5" r="6.9" fill="#a9aaae"/><circle cx="913.6" cy="506.3" r="2" fill="#f2f2f2"/><path d="M910.0 512 q0 -3.5 3.6 -3.5 q3.6 0 3.6 3.5 z" fill="#f2f2f2"/>
<rect x="915.6" y="511" width="6.5" height="7" rx="1.5" fill="#ddd8cf"/><rect x="917.8000000000001" y="512.3" width="2.2" height="4.3" rx="0.5" fill="none" stroke="#f4f2ee" stroke-width="0.6"/>
<g clip-path="url(#phc)"><rect x="924" y="501" width="17" height="16" fill="#dedfdc"/><ellipse cx="931.8" cy="503.6" rx="4" ry="2.6" fill="#5e4536"/><ellipse cx="932" cy="508" rx="3.5" ry="4.3" fill="#e0b4a2"/><path d="M925 516 L926.5 512.6 Q929 511.6 930.5 511.8 L932 514 L933.5 511.8 Q935.5 511.6 937.8 512.6 L939 516 Z" fill="#2e3940"/><path d="M930.3 512 L932 516 L933.7 512 Z" fill="#d4dbe8"/></g>
<circle cx="951.4" cy="508.5" r="6.9" fill="#a9aaae"/><circle cx="951.4" cy="506.3" r="2" fill="#f2f2f2"/><path d="M947.8 512 q0 -3.5 3.6 -3.5 q3.6 0 3.6 3.5 z" fill="#f2f2f2"/>
<circle cx="970.4" cy="508.5" r="6.9" fill="#a9aaae"/><circle cx="970.4" cy="506.3" r="2" fill="#f2f2f2"/><path d="M966.8 512 q0 -3.5 3.6 -3.5 q3.6 0 3.6 3.5 z" fill="#f2f2f2"/>
<rect x="972.4" y="511" width="6.5" height="7" rx="1.5" fill="#ddd8cf"/><rect x="974.6" y="512.3" width="2.2" height="4.3" rx="0.5" fill="none" stroke="#f4f2ee" stroke-width="0.6"/>
<path d="M141.2 40.3 L137.2 44.2 L141.2 48.2 M145.2 40.3 L141.2 44.2 L145.2 48.2" fill="none" stroke="#eef2f5" stroke-width="1.5" stroke-linecap="round"/>
<rect x="8" y="54.5" width="143" height="22.5" fill="#1c2b39" fill-opacity="0.97"/>
<rect x="148" y="54.5" width="3" height="22.5" fill="#4aa9ea"/>
<path d="M20.6 69 V66.3 A4.1 4.1 0 0 1 28.8 66.3 V69 Z" fill="#eef2f4"/><path d="M24.6 67.6 l1.6 -3.4" stroke="#1c2b39" stroke-width="0.7"/><circle cx="24.6" cy="67.6" r="0.9" fill="#1c2b39"/><circle cx="22.3" cy="65.8" r="0.45" fill="#1c2b39"/><circle cx="23.8" cy="63.9" r="0.45" fill="#1c2b39"/><circle cx="27" cy="65.8" r="0.45" fill="#1c2b39"/>
<text x="33.6" y="67.8" font-size="8.62" fill="#eef2f4" font-weight="400" text-anchor="start"  textLength="50.10" lengthAdjust="spacingAndGlyphs">My Dashboard</text>
<path d="M16 90.3 L18 92.3 L20 90.3" fill="none" stroke="#a8bac4" stroke-width="0.8"/>
<text x="26.1" y="93.5" font-size="7.59" fill="#b2c2ca" font-weight="400" text-anchor="start"  textLength="46.50" lengthAdjust="spacingAndGlyphs">OPERATIONAL</text>
<path d="M131.5 95.5 L132 93 L137 88 L139 90 L134 95 Z" fill="#d6dee2"/>
<path d="M21.3 104.6 L23 106.5 L21.3 108.4" fill="none" stroke="#a8bac4" stroke-width="0.7"/>
<text x="30.8" y="108.9" font-size="6.73" fill="#a8b8c0" font-weight="400" text-anchor="start"  textLength="37.20" lengthAdjust="spacingAndGlyphs">SMART VIEWS</text>
<g transform="translate(0,0.00)"><path d="M23.4 124.6 C22.7 123.6 22.1 122.9 22.1 121.9 A2.85 2.85 0 1 1 27.8 121.9 C27.8 122.9 27.2 123.6 26.5 124.6 Z" fill="none" stroke="#f0f4f6" stroke-width="0.9"/><rect x="23.35" y="124.7" width="3.2" height="3.2" rx="1.3" fill="#f0f4f6"/></g>
<text x="32.6" y="125.8" font-size="8.32" fill="#eef3f5" font-weight="400" text-anchor="start"  textLength="41.50" lengthAdjust="spacingAndGlyphs">ABC Intents</text>
<g transform="translate(0,22.96)"><path d="M23.4 124.6 C22.7 123.6 22.1 122.9 22.1 121.9 A2.85 2.85 0 1 1 27.8 121.9 C27.8 122.9 27.2 123.6 26.5 124.6 Z" fill="none" stroke="#f0f4f6" stroke-width="0.9"/><rect x="23.35" y="124.7" width="3.2" height="3.2" rx="1.3" fill="#f0f4f6"/></g>
<text x="32.6" y="148.76" font-size="8.32" fill="#eef3f5" font-weight="400" text-anchor="start"  textLength="85.50" lengthAdjust="spacingAndGlyphs">Approved Conversations</text>
<g transform="translate(0,45.92)"><path d="M23.4 124.6 C22.7 123.6 22.1 122.9 22.1 121.9 A2.85 2.85 0 1 1 27.8 121.9 C27.8 122.9 27.2 123.6 26.5 124.6 Z" fill="none" stroke="#f0f4f6" stroke-width="0.9"/><rect x="23.35" y="124.7" width="3.2" height="3.2" rx="1.3" fill="#f0f4f6"/></g>
<text x="32.6" y="171.72" font-size="8.32" fill="#eef3f5" font-weight="400" text-anchor="start"  textLength="106.30" lengthAdjust="spacingAndGlyphs">Community - Products &amp; Blogs</text>
<g transform="translate(0,68.88)"><path d="M23.4 124.6 C22.7 123.6 22.1 122.9 22.1 121.9 A2.85 2.85 0 1 1 27.8 121.9 C27.8 122.9 27.2 123.6 26.5 124.6 Z" fill="none" stroke="#f0f4f6" stroke-width="0.9"/><rect x="23.35" y="124.7" width="3.2" height="3.2" rx="1.3" fill="#f0f4f6"/></g>
<text x="32.6" y="194.68" font-size="8.32" fill="#eef3f5" font-weight="400" text-anchor="start"  textLength="40.80" lengthAdjust="spacingAndGlyphs">Crisis Recall</text>
<g transform="translate(0,91.84)"><path d="M23.4 124.6 C22.7 123.6 22.1 122.9 22.1 121.9 A2.85 2.85 0 1 1 27.8 121.9 C27.8 122.9 27.2 123.6 26.5 124.6 Z" fill="none" stroke="#f0f4f6" stroke-width="0.9"/><rect x="23.35" y="124.7" width="3.2" height="3.2" rx="1.3" fill="#f0f4f6"/></g>
<text x="32.6" y="217.64" font-size="8.32" fill="#eef3f5" font-weight="400" text-anchor="start"  textLength="33.20" lengthAdjust="spacingAndGlyphs">Facebook</text>
<g transform="translate(0,114.80)"><path d="M23.4 124.6 C22.7 123.6 22.1 122.9 22.1 121.9 A2.85 2.85 0 1 1 27.8 121.9 C27.8 122.9 27.2 123.6 26.5 124.6 Z" fill="none" stroke="#f0f4f6" stroke-width="0.9"/><rect x="23.35" y="124.7" width="3.2" height="3.2" rx="1.3" fill="#f0f4f6"/></g>
<text x="32.6" y="240.60000000000002" font-size="8.32" fill="#eef3f5" font-weight="400" text-anchor="start"  textLength="108.80" lengthAdjust="spacingAndGlyphs">Facebook Surveys - Exclude S...</text>
<g transform="translate(0,137.76)"><path d="M23.4 124.6 C22.7 123.6 22.1 122.9 22.1 121.9 A2.85 2.85 0 1 1 27.8 121.9 C27.8 122.9 27.2 123.6 26.5 124.6 Z" fill="none" stroke="#f0f4f6" stroke-width="0.9"/><rect x="23.35" y="124.7" width="3.2" height="3.2" rx="1.3" fill="#f0f4f6"/></g>
<text x="32.6" y="263.56" font-size="8.32" fill="#eef3f5" font-weight="400" text-anchor="start"  textLength="33.50" lengthAdjust="spacingAndGlyphs">Instagram</text>
<g transform="translate(0,160.72)"><path d="M23.4 124.6 C22.7 123.6 22.1 122.9 22.1 121.9 A2.85 2.85 0 1 1 27.8 121.9 C27.8 122.9 27.2 123.6 26.5 124.6 Z" fill="none" stroke="#f0f4f6" stroke-width="0.9"/><rect x="23.35" y="124.7" width="3.2" height="3.2" rx="1.3" fill="#f0f4f6"/></g>
<text x="32.6" y="286.52" font-size="8.32" fill="#eef3f5" font-weight="400" text-anchor="start"  textLength="42.70" lengthAdjust="spacingAndGlyphs">iOS Reviews</text>
<g transform="translate(0,183.68)"><path d="M23.4 124.6 C22.7 123.6 22.1 122.9 22.1 121.9 A2.85 2.85 0 1 1 27.8 121.9 C27.8 122.9 27.2 123.6 26.5 124.6 Z" fill="none" stroke="#f0f4f6" stroke-width="0.9"/><rect x="23.35" y="124.7" width="3.2" height="3.2" rx="1.3" fill="#f0f4f6"/></g>
<text x="32.6" y="309.48" font-size="8.32" fill="#eef3f5" font-weight="400" text-anchor="start"  textLength="45.90" lengthAdjust="spacingAndGlyphs">Modern Chat</text>
<g transform="translate(0,206.64)"><path d="M23.4 124.6 C22.7 123.6 22.1 122.9 22.1 121.9 A2.85 2.85 0 1 1 27.8 121.9 C27.8 122.9 27.2 123.6 26.5 124.6 Z" fill="none" stroke="#f0f4f6" stroke-width="0.9"/><rect x="23.35" y="124.7" width="3.2" height="3.2" rx="1.3" fill="#f0f4f6"/></g>
<text x="32.6" y="332.44" font-size="8.32" fill="#eef3f5" font-weight="400" text-anchor="start"  textLength="9.30" lengthAdjust="spacingAndGlyphs">P0</text>
<g transform="translate(0,229.60)"><path d="M23.4 124.6 C22.7 123.6 22.1 122.9 22.1 121.9 A2.85 2.85 0 1 1 27.8 121.9 C27.8 122.9 27.2 123.6 26.5 124.6 Z" fill="none" stroke="#f0f4f6" stroke-width="0.9"/><rect x="23.35" y="124.7" width="3.2" height="3.2" rx="1.3" fill="#f0f4f6"/></g>
<text x="32.6" y="355.40000000000003" font-size="8.32" fill="#eef3f5" font-weight="400" text-anchor="start"  textLength="8.60" lengthAdjust="spacingAndGlyphs">P1</text>
<g transform="translate(0,252.56)"><path d="M23.4 124.6 C22.7 123.6 22.1 122.9 22.1 121.9 A2.85 2.85 0 1 1 27.8 121.9 C27.8 122.9 27.2 123.6 26.5 124.6 Z" fill="none" stroke="#f0f4f6" stroke-width="0.9"/><rect x="23.35" y="124.7" width="3.2" height="3.2" rx="1.3" fill="#f0f4f6"/></g>
<text x="32.6" y="378.36" font-size="8.32" fill="#eef3f5" font-weight="400" text-anchor="start"  textLength="9.30" lengthAdjust="spacingAndGlyphs">P2</text>
<g transform="translate(0,275.52)"><path d="M23.4 124.6 C22.7 123.6 22.1 122.9 22.1 121.9 A2.85 2.85 0 1 1 27.8 121.9 C27.8 122.9 27.2 123.6 26.5 124.6 Z" fill="none" stroke="#f0f4f6" stroke-width="0.9"/><rect x="23.35" y="124.7" width="3.2" height="3.2" rx="1.3" fill="#f0f4f6"/></g>
<text x="32.6" y="401.32" font-size="8.32" fill="#eef3f5" font-weight="400" text-anchor="start"  textLength="9.30" lengthAdjust="spacingAndGlyphs">P3</text>
<g transform="translate(0,298.48)"><path d="M23.4 124.6 C22.7 123.6 22.1 122.9 22.1 121.9 A2.85 2.85 0 1 1 27.8 121.9 C27.8 122.9 27.2 123.6 26.5 124.6 Z" fill="none" stroke="#f0f4f6" stroke-width="0.9"/><rect x="23.35" y="124.7" width="3.2" height="3.2" rx="1.3" fill="#f0f4f6"/></g>
<text x="32.6" y="424.28000000000003" font-size="8.32" fill="#eef3f5" font-weight="400" text-anchor="start"  textLength="81.40" lengthAdjust="spacingAndGlyphs">Rejected Conversations</text>
<g transform="translate(0,321.44)"><path d="M23.4 124.6 C22.7 123.6 22.1 122.9 22.1 121.9 A2.85 2.85 0 1 1 27.8 121.9 C27.8 122.9 27.2 123.6 26.5 124.6 Z" fill="none" stroke="#f0f4f6" stroke-width="0.9"/><rect x="23.35" y="124.7" width="3.2" height="3.2" rx="1.3" fill="#f0f4f6"/></g>
<text x="32.6" y="447.24" font-size="8.32" fill="#eef3f5" font-weight="400" text-anchor="start"  textLength="97.60" lengthAdjust="spacingAndGlyphs">Secure Transfers from Social</text>
<g transform="translate(0,344.40)"><path d="M23.4 124.6 C22.7 123.6 22.1 122.9 22.1 121.9 A2.85 2.85 0 1 1 27.8 121.9 C27.8 122.9 27.2 123.6 26.5 124.6 Z" fill="none" stroke="#f0f4f6" stroke-width="0.9"/><rect x="23.35" y="124.7" width="3.2" height="3.2" rx="1.3" fill="#f0f4f6"/></g>
<text x="32.6" y="470.20000000000005" font-size="8.32" fill="#eef3f5" font-weight="400" text-anchor="start"  textLength="93.70" lengthAdjust="spacingAndGlyphs">Social/Messaging Channels</text>
<g transform="translate(0,367.36)"><path d="M23.4 124.6 C22.7 123.6 22.1 122.9 22.1 121.9 A2.85 2.85 0 1 1 27.8 121.9 C27.8 122.9 27.2 123.6 26.5 124.6 Z" fill="none" stroke="#f0f4f6" stroke-width="0.9"/><rect x="23.35" y="124.7" width="3.2" height="3.2" rx="1.3" fill="#f0f4f6"/></g>
<text x="32.6" y="493.16" font-size="8.32" fill="#eef3f5" font-weight="400" text-anchor="start"  textLength="24.40" lengthAdjust="spacingAndGlyphs">Twitter</text>
</svg>
</body></html>
